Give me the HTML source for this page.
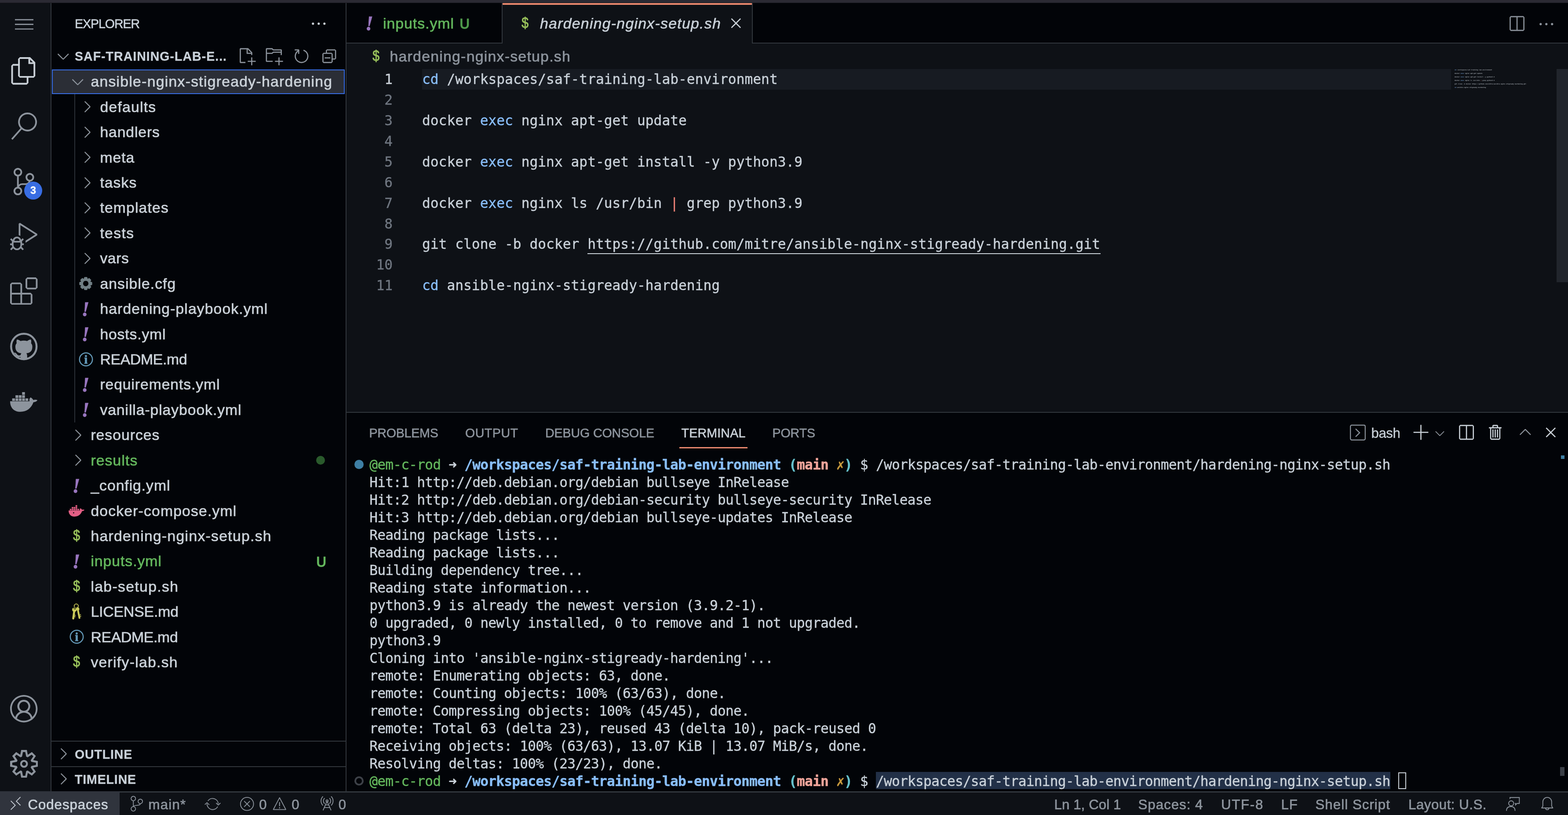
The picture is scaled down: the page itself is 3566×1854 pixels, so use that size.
<!DOCTYPE html>
<html lang="en"><head><meta charset="utf-8"><title>hardening-nginx-setup.sh - saf-training-lab-environment</title>
<style>
#root{position:absolute;left:0;top:0;width:3566px;height:1854px;will-change:transform}
html,body{margin:0;padding:0;background:#0d1117;overflow:hidden}
body{width:3566px;height:1854px;position:relative;color:#cad1d8;-webkit-font-smoothing:antialiased}
.t{position:absolute;white-space:pre;margin:0;padding:0}
.ui{font-family:"Liberation Sans", sans-serif;font-size:33.8px;font-weight:400;font-style:normal;line-height:51px;height:51px;-webkit-text-stroke:0.7px}
.uii{font-family:"Liberation Sans", sans-serif;font-size:33.8px;font-weight:400;font-style:italic;line-height:51px;height:51px;-webkit-text-stroke:0.6px}
.ttl{font-family:"Liberation Sans", sans-serif;font-size:28.6px;font-weight:400;font-style:normal;line-height:43px;height:43px;-webkit-text-stroke:0.6px}
.hdr{font-family:"Liberation Sans", sans-serif;font-size:28.6px;font-weight:700;font-style:normal;line-height:43px;height:43px;-webkit-text-stroke:0.3px}
.sb{font-family:"Liberation Sans", sans-serif;font-size:31.2px;font-weight:400;font-style:normal;line-height:47px;height:47px;-webkit-text-stroke:0.7px}
.bash{font-family:"Liberation Sans", sans-serif;font-size:31.2px;font-weight:400;font-style:normal;line-height:47px;height:47px;-webkit-text-stroke:0.3px}
.badge{font-family:"Liberation Sans", sans-serif;font-size:23.4px;font-weight:700;font-style:normal;line-height:35px;height:35px;-webkit-text-stroke:0.5px}
.code{font-family:"DejaVu Sans Mono", "Liberation Mono", monospace;font-size:31.2px;font-weight:400;font-style:normal;line-height:47px;height:47px;-webkit-text-stroke:0.4px}
.ln{font-family:"DejaVu Sans Mono", "Liberation Mono", monospace;font-size:31.2px;font-weight:400;font-style:normal;line-height:47px;height:47px;-webkit-text-stroke:0.4px}
.term{font-family:"DejaVu Sans Mono", "Liberation Mono", monospace;font-size:31.2px;font-weight:400;font-style:normal;line-height:47px;height:47px;-webkit-text-stroke:0.4px}
.fi{font-family:"Liberation Serif", serif;font-size:45.5px;font-weight:700;font-style:italic;line-height:68px;height:68px;-webkit-text-stroke:0.9px}
.fd{font-family:"Liberation Sans", sans-serif;font-size:33px;font-weight:400;font-style:normal;line-height:50px;height:50px;-webkit-text-stroke:1.0px}

.fd{transform:scaleX(.86);transform-origin:50% 50%}
.term b{font-weight:700}
.mm{position:absolute;font-family:"DejaVu Sans Mono","Liberation Mono",monospace;font-size:3.09px;line-height:4.01px;white-space:pre;font-weight:700;letter-spacing:0.134px;opacity:.82}

</style></head><body><div id="root">
<div style="position:absolute;left:0px;top:0px;width:3566px;height:1854px;background:#0e1116;"></div>
<div style="position:absolute;left:0px;top:0px;width:3566px;height:6px;background:#2b2a33;"></div>
<div style="position:absolute;left:0px;top:6px;width:3566px;height:1px;background:#17171d;"></div>
<div style="position:absolute;left:0px;top:7px;width:115px;height:1793px;background:#0e1116;"></div>
<div style="position:absolute;left:115px;top:7px;width:2px;height:1793px;background:#31363c;"></div>
<div style="position:absolute;left:117px;top:7px;width:669px;height:1793px;background:#020408;"></div>
<div style="position:absolute;left:786px;top:7px;width:2px;height:1793px;background:#31363c;"></div>
<div style="position:absolute;left:788px;top:7px;width:2778px;height:92px;background:#020408;"></div>
<div style="position:absolute;left:788px;top:97px;width:2778px;height:2px;background:#31363c;"></div>
<div style="position:absolute;left:1141px;top:7px;width:2px;height:92px;background:#31363c;"></div>
<div style="position:absolute;left:1143px;top:7px;width:567px;height:92px;background:#0e1116;"></div>
<div style="position:absolute;left:1143px;top:7px;width:567px;height:4px;background:#e8876d;"></div>
<div style="position:absolute;left:1710px;top:7px;width:2px;height:92px;background:#31363c;"></div>
<div style="position:absolute;left:960px;top:157px;width:2340px;height:47px;background:#171b22;"></div>
<div style="position:absolute;left:3540px;top:157px;width:26px;height:485px;background:#21252c;"></div>
<div style="position:absolute;left:788px;top:937px;width:2778px;height:863px;background:#020408;"></div>
<div style="position:absolute;left:788px;top:937px;width:2778px;height:2px;background:#31363c;"></div>
<div style="position:absolute;left:0px;top:1800px;width:3566px;height:54px;background:#0e1116;"></div>
<div style="position:absolute;left:0px;top:1800px;width:3566px;height:3px;background:#31363c;"></div>
<div style="position:absolute;left:0px;top:1800px;width:272px;height:54px;background:#30343d;"></div>
<svg style="position:absolute;left:33.6px;top:32.8px;color:#8d949d;" width="42.2" height="42.2" viewBox="0 0 16 16" fill="currentColor"><path d="M16 5H0V4h16v1zm0 8H0v-1h16v1zm0-4.008H0V8h16v.992z"/></svg>
<svg style="position:absolute;left:23.3px;top:130.3px;color:#cad1d8;" width="62.4" height="62.4" viewBox="0 0 24 24" fill="currentColor"><path d="M17.5 0h-9L7 1.5V6H2.5L1 7.5v15.07L2.5 24h12.07L16 22.57V18h4.7l1.3-1.43V4.5L17.5 0zm0 2.12l2.38 2.38H17.5V2.12zm-3 20.38h-12v-15H7v9.07L8.5 18h6v4.5zm6-6h-12v-15H16V6h4.5v10.5z"/></svg>
<svg style="position:absolute;left:23.3px;top:256.3px;color:#8d949d;" width="62.4" height="62.4" viewBox="0 0 24 24" fill="currentColor"><path d="M15.25 0a8.25 8.25 0 0 0-6.18 13.72L1 22.88l1.12 1 8.05-9.12A8.251 8.251 0 1 0 15.25.01V0zm0 15a6.75 6.75 0 1 1 0-13.5 6.75 6.75 0 0 1 0 13.5z"/></svg>
<svg style="position:absolute;left:23.3px;top:381.8px;color:#8d949d;" width="62.4" height="62.4" viewBox="0 0 24 24" fill="currentColor"><path d="M21.007 8.222A3.738 3.738 0 0 0 15.045 5.2a3.737 3.737 0 0 0 1.156 6.583 2.988 2.988 0 0 1-2.668 1.67h-2.99a4.456 4.456 0 0 0-2.989 1.165V7.4a3.737 3.737 0 1 0-1.494 0v9.117a3.776 3.776 0 1 0 1.816.099 2.99 2.99 0 0 1 2.668-1.667h2.99a4.484 4.484 0 0 0 4.223-3.039 3.736 3.736 0 0 0 3.25-3.687zM4.565 3.738a2.242 2.242 0 1 1 4.484 0 2.242 2.242 0 0 1-4.484 0zm4.484 16.441a2.242 2.242 0 1 1-4.484 0 2.242 2.242 0 0 1 4.484 0zm8.221-9.715a2.242 2.242 0 1 1 0-4.485 2.242 2.242 0 0 1 0 4.485z"/></svg>
<svg style="position:absolute;left:23.3px;top:506.8px;color:#8d949d;" width="62.4" height="62.4" viewBox="0 0 24 24" fill="currentColor"><path d="M10.94 13.5l-1.32 1.32a3.73 3.73 0 0 0-7.24 0L1.06 13.5 0 14.56l1.72 1.72-.22.22V18H0v1.5h1.5v.08c.077.489.214.966.41 1.42L0 22.94 1.06 24l1.65-1.65A4.308 4.308 0 0 0 6 24a4.31 4.31 0 0 0 3.29-1.65L10.94 24 12 22.94 10.09 21c.198-.464.336-.951.41-1.45v-.1H12V18h-1.5v-1.5l-.22-.22L12 14.56l-1.06-1.06zM6 13.5a2.25 2.25 0 0 1 2.25 2.25h-4.5A2.25 2.25 0 0 1 6 13.5zm3 6a3.33 3.33 0 0 1-3 3 3.33 3.33 0 0 1-3-3v-2.25h6v2.25zm14.76-9.9v1.26L13.5 17.37V15.6l8.5-5.37L9 2v9.46a5.07 5.07 0 0 0-1.5-.72V.63L8.64 0l15.12 9.6z"/></svg>
<svg style="position:absolute;left:23.3px;top:630.8px;color:#8d949d;" width="62.4" height="62.4" viewBox="0 0 24 24" fill="currentColor"><path d="M13.5 1.5L15 0h7.5L24 1.5V9l-1.5 1.5H15L13.5 9V1.5zm1.5 0V9h7.5V1.5H15zM0 15V6l1.5-1.5H9L10.5 6v7.5H18l1.5 1.5v7.5L18 24H1.5L0 22.5V15zm9-1.5V6H1.5v7.5H9zM9 15H1.5v7.5H9V15zm1.5 7.5H18V15h-7.5v7.5z"/></svg>
<svg style="position:absolute;left:23.3px;top:757.3px;color:#8d949d;" width="62.4" height="62.4" viewBox="0 0 16 16" fill="currentColor"><circle cx="8" cy="8" r="7.6"/><g transform="translate(8 8.55) scale(0.97) translate(-8 -8)"><path fill="#0e1116" d="M8 0C3.58 0 0 3.58 0 8c0 3.54 2.29 6.53 5.47 7.59.4.07.55-.17.55-.38 0-.19-.01-.82-.01-1.49-2.01.37-2.53-.49-2.69-.94-.09-.23-.48-.94-.82-1.13-.28-.15-.68-.52-.01-.53.63-.01 1.08.58 1.23.82.72 1.21 1.87.87 2.33.66.07-.52.28-.87.51-1.07-1.78-.2-3.64-.89-3.64-3.95 0-.87.31-1.59.82-2.15-.08-.2-.36-1.02.08-2.12 0 0 .67-.21 2.2.82.64-.18 1.32-.27 2-.27.68 0 1.36.09 2 .27 1.53-1.04 2.2-.82 2.2-.82.44 1.1.16 1.92.08 2.12.51.56.82 1.27.82 2.15 0 3.07-1.87 3.75-3.65 3.95.29.25.54.73.54 1.48 0 1.07-.01 1.93-.01 2.2 0 .21.15.46.55.38A8.013 8.013 0 0016 8c0-4.42-3.58-8-8-8z"/></g><circle cx="8" cy="8" r="7.42" fill="none" stroke="currentColor" stroke-width="1.16"/></svg>
<svg style="position:absolute;left:23.3px;top:883.4px;color:#8d949d;" width="62.4" height="62.4" viewBox="0 0 24 24" fill="currentColor"><path d="M0 11.4 H17.0 C16.6 10.2 16.9 8.9 17.9 8.1 C19.0 8.7 19.9 9.6 20.3 10.4 C21.5 10.0 22.9 10.1 23.9 10.5 C23.3 11.6 22.1 12.2 20.4 12.3 C18.6 17.5 14.5 20.65 9.0 20.65 C3.5 20.65 0 17.3 0 11.4 Z"/><rect x="1.80" y="8.95" width="2.45" height="2.2"/><rect x="4.70" y="8.95" width="2.45" height="2.2"/><rect x="7.60" y="8.95" width="2.45" height="2.2"/><rect x="10.50" y="8.95" width="2.45" height="2.2"/><rect x="13.40" y="8.95" width="2.45" height="2.2"/><rect x="4.70" y="6.2" width="2.45" height="2.35"/><rect x="7.60" y="6.2" width="2.45" height="2.35"/><rect x="10.50" y="6.2" width="2.45" height="2.35"/><rect x="10.5" y="3.46" width="2.45" height="2.35"/></svg>
<svg style="position:absolute;left:23.3px;top:1581.3px;color:#8d949d;" width="62.4" height="62.4" viewBox="0 0 16 16" fill="currentColor"><path d="M16 7.992C16 3.58 12.416 0 8 0S0 3.58 0 7.992c0 2.43 1.104 4.62 2.832 6.09.016.016.032.016.032.032.144.112.288.224.448.336.08.048.144.111.224.175A7.98 7.98 0 0 0 8.016 16a7.98 7.98 0 0 0 4.48-1.375c.08-.048.144-.111.224-.16.144-.111.304-.223.448-.335.016-.016.032-.016.032-.032 1.696-1.487 2.8-3.676 2.8-6.106zm-8 7.001c-1.504 0-2.88-.48-4.016-1.279.016-.128.048-.255.08-.383a4.17 4.17 0 0 1 .416-.991c.176-.304.384-.576.64-.816.24-.24.528-.463.816-.639.304-.176.624-.304.976-.4A4.15 4.15 0 0 1 8 10.342a4.185 4.185 0 0 1 2.928 1.166c.368.368.656.8.864 1.295.112.288.192.592.24.911A7.03 7.03 0 0 1 8 14.993zm-2.448-7.4a2.49 2.49 0 0 1-.208-1.024c0-.351.064-.703.208-1.023.144-.32.336-.607.576-.847.24-.24.528-.431.848-.575.32-.144.672-.208 1.024-.208.368 0 .704.064 1.024.208.32.144.608.336.848.575.24.24.432.528.576.847.144.32.208.672.208 1.023 0 .368-.064.704-.208 1.023a2.84 2.84 0 0 1-.576.848 2.84 2.84 0 0 1-.848.575 2.715 2.715 0 0 1-2.064 0 2.84 2.84 0 0 1-.848-.575 2.526 2.526 0 0 1-.56-.848zm7.424 5.306c0-.032-.016-.048-.016-.08a5.22 5.22 0 0 0-.688-1.406 4.883 4.883 0 0 0-1.088-1.135 5.207 5.207 0 0 0-1.04-.608 2.82 2.82 0 0 0 .464-.383 4.2 4.2 0 0 0 .624-.784 3.624 3.624 0 0 0 .528-1.934 3.71 3.71 0 0 0-.288-1.47 3.799 3.799 0 0 0-.816-1.199 3.845 3.845 0 0 0-1.2-.8 3.72 3.72 0 0 0-1.472-.287 3.72 3.72 0 0 0-1.472.288 3.631 3.631 0 0 0-1.2.815 3.84 3.84 0 0 0-.8 1.199 3.71 3.71 0 0 0-.288 1.47c0 .352.048.688.144 1.007.096.336.224.64.4.927.16.288.384.544.624.784.144.144.304.271.48.383a5.12 5.12 0 0 0-1.04.624c-.416.32-.784.703-1.088 1.119a4.999 4.999 0 0 0-.688 1.406c-.016.032-.016.064-.016.08C1.776 11.636.992 9.91.992 7.992.992 4.14 4.144.991 8 .991s7.008 3.149 7.008 7.001a6.96 6.96 0 0 1-2.032 4.907z"/></svg>
<svg style="position:absolute;left:22.950000000000003px;top:1705.85px;color:#8d949d;" width="63.3" height="63.3" viewBox="0 0 24 24" fill="currentColor"><path fill-rule="evenodd" clip-rule="evenodd" d="M19.85 8.75l4.15.83v4.84l-4.15.83 2.35 3.52-3.43 3.43-3.52-2.35-.83 4.15H9.58l-.83-4.15-3.52 2.35-3.43-3.43 2.35-3.52L0 14.42V9.58l4.15-.83L1.8 5.23 5.23 1.8l3.52 2.35L9.58 0h4.84l.83 4.15 3.52-2.35 3.43 3.43-2.35 3.52zm-1.57 5.07l4-.81v-2l-4-.81-.54-1.3 2.29-3.43-1.43-1.43-3.43 2.29-1.3-.54-.81-4h-2l-.81 4-1.3.54-3.43-2.29-1.43 1.43L6.38 8.9l-.54 1.3-4 .81v2l4 .81.54 1.3-2.29 3.43 1.43 1.43 3.43-2.29 1.3.54.81 4h2l.81-4 1.3-.54 3.43 2.29 1.43-1.43-2.29-3.43.54-1.3z"/><circle cx="12" cy="12" r="2.55" fill="none" stroke="currentColor" stroke-width="1.65"/></svg>
<div style="position:absolute;left:54.900000000000006px;top:412.7px;width:41px;height:41px;border-radius:50%;background:#386de3"></div>
<svg style="position:absolute;left:704.2px;top:32.7px;color:#cad1d8;" width="41.6" height="41.6" viewBox="0 0 16 16" fill="currentColor"><path d="M4 8a1 1 0 1 1-2 0 1 1 0 0 1 2 0zm5 0a1 1 0 1 1-2 0 1 1 0 0 1 2 0zm5 0a1 1 0 1 1-2 0 1 1 0 0 1 2 0z"/></svg>
<svg style="position:absolute;left:122.7px;top:107.2px;color:#8d949d;" width="41.6" height="41.6" viewBox="0 0 16 16" fill="currentColor"><path d="M7.976 10.072l4.357-4.357.62.618L8.284 11h-.618L3 6.333l.619-.618 4.357 4.357z"/></svg>
<svg style="position:absolute;left:540.2px;top:107.2px;color:#8d949d;" width="41.6" height="41.6" viewBox="0 0 16 16" fill="currentColor"><path d="M9.5 1.1l3.4 3.5.1.4v2h-1V6H8V2H3v11h4v1H2.5l-.5-.5v-12l.5-.5h6.7l.3.1zM9 2v3h2.9L9 2zm4 14h-1v-3H9v-1h3V9h1v3h3v1h-3v3z"/></svg>
<svg style="position:absolute;left:602.2px;top:107.2px;color:#8d949d;" width="41.6" height="41.6" viewBox="0 0 16 16" fill="currentColor"><path d="M14.5 2H7.71l-.85-.85L6.51 1h-5l-.5.5v11l.5.5H7v-1H1.99V6h4.49l.35-.15.86-.86H14v1.5l-.001.51h1.011V2.5L14.5 2zm-.51 2h-6.5l-.35.15-.86.86H2v-3h4.29l.85.85.36.15H14l-.01.99zM13 16h-1v-3H9v-1h3V9h1v3h3v1h-3v3z"/></svg>
<svg style="position:absolute;left:664.9000000000001px;top:107.2px;color:#8d949d;" width="41.6" height="41.6" viewBox="0 0 16 16" fill="currentColor"><path d="M4.681 3H2V2h3.5l.5.5V6H5V4a5 5 0 1 0 4.53-.761l.302-.954A6 6 0 1 1 4.681 3z"/></svg>
<svg style="position:absolute;left:727.7px;top:107.2px;color:#8d949d;" width="41.6" height="41.6" viewBox="0 0 16 16" fill="currentColor"><path d="M9 9H4v1h5V9z"/><path d="M5 3l1-1h7l1 1v7l-1 1h-2v2l-1 1H3l-1-1V6l1-1h2V3zm1 2h4l1 1v4h2V3H6v2zm4 1H3v7h7V6z"/></svg>
<div style="position:absolute;left:118px;top:158px;width:666.4px;height:56px;box-sizing:border-box;background:#2b2e36;border:2px solid #386de3"></div>
<div style="position:absolute;left:169px;top:214.43px;width:2px;height:746.59px;background:#2a2f36;"></div>
<svg style="position:absolute;left:156.0px;top:164.915px;color:#8d949d;" width="41.6" height="41.6" viewBox="0 0 16 16" fill="currentColor"><path d="M7.976 10.072l4.357-4.357.62.618L8.284 11h-.618L3 6.333l.619-.618 4.357 4.357z"/></svg>
<svg style="position:absolute;left:177.1px;top:222.345px;color:#8d949d;" width="41.6" height="41.6" viewBox="0 0 16 16" fill="currentColor"><path d="M10.072 8.024L5.715 3.667l.618-.62L11 7.716v.618L6.333 13l-.618-.619 4.357-4.357z"/></svg>
<svg style="position:absolute;left:177.1px;top:279.775px;color:#8d949d;" width="41.6" height="41.6" viewBox="0 0 16 16" fill="currentColor"><path d="M10.072 8.024L5.715 3.667l.618-.62L11 7.716v.618L6.333 13l-.618-.619 4.357-4.357z"/></svg>
<svg style="position:absolute;left:177.1px;top:337.2049999999999px;color:#8d949d;" width="41.6" height="41.6" viewBox="0 0 16 16" fill="currentColor"><path d="M10.072 8.024L5.715 3.667l.618-.62L11 7.716v.618L6.333 13l-.618-.619 4.357-4.357z"/></svg>
<svg style="position:absolute;left:177.1px;top:394.635px;color:#8d949d;" width="41.6" height="41.6" viewBox="0 0 16 16" fill="currentColor"><path d="M10.072 8.024L5.715 3.667l.618-.62L11 7.716v.618L6.333 13l-.618-.619 4.357-4.357z"/></svg>
<svg style="position:absolute;left:177.1px;top:452.06499999999994px;color:#8d949d;" width="41.6" height="41.6" viewBox="0 0 16 16" fill="currentColor"><path d="M10.072 8.024L5.715 3.667l.618-.62L11 7.716v.618L6.333 13l-.618-.619 4.357-4.357z"/></svg>
<svg style="position:absolute;left:177.1px;top:509.49499999999995px;color:#8d949d;" width="41.6" height="41.6" viewBox="0 0 16 16" fill="currentColor"><path d="M10.072 8.024L5.715 3.667l.618-.62L11 7.716v.618L6.333 13l-.618-.619 4.357-4.357z"/></svg>
<svg style="position:absolute;left:177.1px;top:566.9250000000001px;color:#8d949d;" width="41.6" height="41.6" viewBox="0 0 16 16" fill="currentColor"><path d="M10.072 8.024L5.715 3.667l.618-.62L11 7.716v.618L6.333 13l-.618-.619 4.357-4.357z"/></svg>
<svg style="position:absolute;left:179.7px;top:629.6550000000001px" width="30" height="30" viewBox="0 0 30 30"><path fill="#717f85" fill-rule="evenodd" stroke="#717f85" stroke-width="1.2" stroke-linejoin="round" d="M11.06 4.94 L12.21 0.97 L17.79 0.97 L18.94 4.94 L19.33 5.11 L22.94 3.11 L26.89 7.06 L24.89 10.67 L25.06 11.06 L29.03 12.21 L29.03 17.79 L25.06 18.94 L24.89 19.33 L26.89 22.94 L22.94 26.89 L19.33 24.89 L18.94 25.06 L17.79 29.03 L12.21 29.03 L11.06 25.06 L10.67 24.89 L7.06 26.89 L3.11 22.94 L5.11 19.33 L4.94 18.94 L0.97 17.79 L0.97 12.21 L4.94 11.06 L5.11 10.67 L3.11 7.06 L7.06 3.11 L10.67 5.11Z M15 8.2 a6.800 6.800 0 1 0 0.010 0Z"/></svg>
<svg style="position:absolute;left:178.5px;top:800.6450000000001px" width="33" height="33" viewBox="0 0 33 33"><circle cx="16.5" cy="16.5" r="14.7" fill="none" stroke="#6398b7" stroke-width="2.5"/><text x="16.3" y="25.8" text-anchor="middle" font-family="Liberation Serif, serif" font-weight="700" font-size="27.5" fill="#6398b7" stroke="#6398b7" stroke-width="0.9">i</text></svg>
<svg style="position:absolute;left:155.7px;top:968.9350000000001px;color:#8d949d;" width="41.6" height="41.6" viewBox="0 0 16 16" fill="currentColor"><path d="M10.072 8.024L5.715 3.667l.618-.62L11 7.716v.618L6.333 13l-.618-.619 4.357-4.357z"/></svg>
<svg style="position:absolute;left:155.7px;top:1026.365px;color:#8d949d;" width="41.6" height="41.6" viewBox="0 0 16 16" fill="currentColor"><path d="M10.072 8.024L5.715 3.667l.618-.62L11 7.716v.618L6.333 13l-.618-.619 4.357-4.357z"/></svg>
<svg style="position:absolute;left:156.1px;top:1143.525px;color:#e35f85" width="36.2" height="36.2" viewBox="0 0 24 24" fill="currentColor"><path d="M0 11.4 H17.0 C16.6 10.2 16.9 8.9 17.9 8.1 C19.0 8.7 19.9 9.6 20.3 10.4 C21.5 10.0 22.9 10.1 23.9 10.5 C23.3 11.6 22.1 12.2 20.4 12.3 C18.6 17.5 14.5 20.65 9.0 20.65 C3.5 20.65 0 17.3 0 11.4 Z"/><rect x="1.80" y="8.95" width="2.45" height="2.2"/><rect x="4.70" y="8.95" width="2.45" height="2.2"/><rect x="7.60" y="8.95" width="2.45" height="2.2"/><rect x="10.50" y="8.95" width="2.45" height="2.2"/><rect x="13.40" y="8.95" width="2.45" height="2.2"/><rect x="4.70" y="6.2" width="2.45" height="2.35"/><rect x="7.60" y="6.2" width="2.45" height="2.35"/><rect x="10.50" y="6.2" width="2.45" height="2.35"/><rect x="10.5" y="3.46" width="2.45" height="2.35"/><circle cx="7.6" cy="15" r="0.9" fill="#020408"/></svg>
<svg style="position:absolute;left:159.7px;top:1371.5449999999998px;overflow:visible" width="27.2" height="38.8" viewBox="-14 -20 28 40" fill="none" stroke="#cbcb5a" stroke-linecap="round"><circle cx="-0.2" cy="-13.2" r="4.8" stroke-width="1.9"/><path d="M3.3 -5.8 L7.4 14.8" stroke-width="4.2"/><circle cx="3.2" cy="-6.2" r="3.2" fill="#cbcb5a" stroke-width="1.5"/><path d="M-4.6 -3.5 L-7.2 16" stroke-width="4.8"/><circle cx="-4.6" cy="-4.6" r="4.3" fill="#cbcb5a" stroke-width="2"/><circle cx="-3.4" cy="-8.2" r="2.2" stroke="#020408" stroke-width="1.1"/><path d="M-4.2 8 l2.2 0.6 M-4.6 11.5 l2.2 0.6 M8.6 7.5 l1.6 -0.6 M9.3 11 l1.6 -0.6" stroke-width="1.6"/></svg>
<svg style="position:absolute;left:157.5px;top:1432.375px" width="33" height="33" viewBox="0 0 33 33"><circle cx="16.5" cy="16.5" r="14.7" fill="none" stroke="#6398b7" stroke-width="2.5"/><text x="16.3" y="25.8" text-anchor="middle" font-family="Liberation Serif, serif" font-weight="700" font-size="27.5" fill="#6398b7" stroke="#6398b7" stroke-width="0.9">i</text></svg>
<div style="position:absolute;left:719px;top:1037.165px;width:20px;height:20px;border-radius:50%;background:#2a5a2c"></div>
<div style="position:absolute;left:117px;top:1685px;width:669px;height:2px;background:#31363c;"></div>
<div style="position:absolute;left:117px;top:1743px;width:669px;height:2px;background:#31363c;"></div>
<svg style="position:absolute;left:123.2px;top:1694.2px;color:#8d949d;" width="41.6" height="41.6" viewBox="0 0 16 16" fill="currentColor"><path d="M10.072 8.024L5.715 3.667l.618-.62L11 7.716v.618L6.333 13l-.618-.619 4.357-4.357z"/></svg>
<svg style="position:absolute;left:123.2px;top:1751.2px;color:#8d949d;" width="41.6" height="41.6" viewBox="0 0 16 16" fill="currentColor"><path d="M10.072 8.024L5.715 3.667l.618-.62L11 7.716v.618L6.333 13l-.618-.619 4.357-4.357z"/></svg>
<svg style="position:absolute;left:1653.2px;top:32.2px;color:#cad1d8;" width="41.6" height="41.6" viewBox="0 0 16 16" fill="currentColor"><path d="M8 8.707l3.646 3.647.708-.707L8.707 8l3.647-3.646-.707-.708L8 7.293 4.354 3.646l-.707.708L7.293 8l-3.646 3.646.707.708L8 8.707z"/></svg>
<svg style="position:absolute;left:3428.2px;top:33.7px;color:#8d949d;" width="41.6" height="41.6" viewBox="0 0 16 16" fill="currentColor"><path d="M14 1H3L2 2v11l1 1h11l1-1V2l-1-1zM8 13H3V2h5v11zm6 0H9V2h5v11z"/></svg>
<svg style="position:absolute;left:3496.2px;top:33.7px;color:#8d949d;" width="41.6" height="41.6" viewBox="0 0 16 16" fill="currentColor"><path d="M4 8a1 1 0 1 1-2 0 1 1 0 0 1 2 0zm5 0a1 1 0 1 1-2 0 1 1 0 0 1 2 0zm5 0a1 1 0 1 1-2 0 1 1 0 0 1 2 0z"/></svg>
<div style="position:absolute;left:1336.26px;top:575.6px;width:1166.406px;height:2px;background:#cad1d8;"></div>
<div class="mm" style="left:3307.9px;top:156.6px"><span style="color:#89befa">cd</span> /workspaces/saf-training-lab-environment

docker <span style="color:#89befa">exec</span> nginx apt-get update

docker <span style="color:#89befa">exec</span> nginx apt-get install -y python3.9

docker <span style="color:#89befa">exec</span> nginx ls /usr/bin <span style="color:#ee8277">|</span> grep python3.9

git clone -b docker https://github.com/mitre/ansible-nginx-stigready-hardening.git

<span style="color:#89befa">cd</span> ansible-nginx-stigready-hardening</div>
<div style="position:absolute;left:1545px;top:1017px;width:154.5px;height:3px;background:#e8876d;"></div>
<svg style="position:absolute;left:3069.9px;top:965.9px" width="36" height="36" viewBox="0 0 36 36" fill="none" stroke="#8d949d" stroke-width="2.2"><rect x="1.2" y="1.2" width="33.6" height="33.6" rx="3"/><path d="M13 9.500 l9 9 l-9 9" stroke-width="2.4"/></svg>
<svg style="position:absolute;left:3212.0px;top:963.6px;color:#cad1d8;" width="41.6" height="41.6" viewBox="0 0 16 16" fill="currentColor"><path d="M14 7v1H8v6H7V8H1V7h6V1h1v6h6z"/></svg>
<svg style="position:absolute;left:3257.5px;top:968.5px;color:#8d949d;" width="33" height="33" viewBox="0 0 16 16" fill="currentColor"><path d="M7.976 10.072l4.357-4.357.62.618L8.284 11h-.618L3 6.333l.619-.618 4.357 4.357z"/></svg>
<svg style="position:absolute;left:3313.2px;top:963.8000000000001px;color:#cad1d8;" width="41.6" height="41.6" viewBox="0 0 16 16" fill="currentColor"><path d="M14 1H3L2 2v11l1 1h11l1-1V2l-1-1zM8 13H3V2h5v11zm6 0H9V2h5v11z"/></svg>
<svg style="position:absolute;left:3381.2px;top:963.8000000000001px;color:#cad1d8;" width="41.6" height="41.6" viewBox="0 0 16 16" fill="currentColor"><path d="M10 3h3v1h-1v9l-1 1H4l-1-1V4H2V3h3V2a1 1 0 0 1 1-1h3a1 1 0 0 1 1 1v1zM9 2H6v1h3V2zM4 13h7V4H4v9zm2-8H5v7h1V5zm1 0h1v7H7V5zm2 0h1v7H9V5z"/></svg>
<svg style="position:absolute;left:3448.2px;top:962.8000000000001px;color:#8d949d;" width="41.6" height="41.6" viewBox="0 0 16 16" fill="currentColor"><path d="M8.024 5.928l-4.357 4.357-.62-.618L7.716 5h.618L13 9.667l-.619.618-4.357-4.357z"/></svg>
<svg style="position:absolute;left:3505.7px;top:962.8000000000001px;color:#cad1d8;" width="41.6" height="41.6" viewBox="0 0 16 16" fill="currentColor"><path d="M8 8.707l3.646 3.647.708-.707L8.707 8l3.647-3.646-.707-.708L8 7.293 4.354 3.646l-.707.708L7.293 8l-3.646 3.646.707.708L8 8.707z"/></svg>
<div style="position:absolute;left:1992.3px;top:1756px;width:1170px;height:39px;background:#223047;"></div>
<div style="position:absolute;left:3180px;top:1756.5px;width:18px;height:38px;border:2px solid #cad1d8;box-sizing:border-box"></div>
<div style="position:absolute;left:805.9px;top:1045.9px;width:21px;height:21px;border-radius:50%;background:#3e7fa4"></div>
<div style="position:absolute;left:805.9px;top:1765.9px;width:21px;height:21px;border-radius:50%;border:4px solid #3d4148;box-sizing:border-box"></div>
<div style="position:absolute;left:3550px;top:1036px;width:8px;height:8px;background:#3e7fa4;"></div>
<div style="position:absolute;left:3548px;top:1745px;width:10px;height:20px;background:#3a3f47;"></div>
<svg style="position:absolute;left:15.2px;top:1808.2px;color:#cad1d8;" width="41.6" height="41.6" viewBox="0 0 16 16" fill="currentColor"><g fill="none" stroke="currentColor" stroke-width="0.7"><path d="M3.7 5.35 L7.55 9.2 L3.7 13.05"/><path d="M12.15 2.0 L8.5 5.65 L12.15 9.3"/></g></svg>
<svg style="position:absolute;left:289.7px;top:1808.2px;color:#8d949d;" width="41.6" height="41.6" viewBox="0 0 16 16" fill="currentColor"><g fill="none" stroke="currentColor" stroke-width="0.7"><circle cx="5.1" cy="3.3" r="1.95"/><circle cx="5.1" cy="12.3" r="1.95"/><circle cx="11.2" cy="5.8" r="1.95"/><path d="M5.1 5.25 V10.35 M11.2 7.75 C11.2 10 5.1 8.6 5.1 10.35"/></g></svg>
<svg style="position:absolute;left:462.8px;top:1808.2px;color:#8d949d;" width="41.6" height="41.6" viewBox="0 0 16 16" fill="currentColor"><g fill="none" stroke="currentColor" stroke-width="0.7"><path d="M3.76 5.35 A5 5 0 0 1 12.85 7.85 M12.38 10.35 A5 5 0 0 1 2.98 7.85"/><path d="M10.97 7.22 L12.85 8.95 L14.73 7.22 M1.100 8.600 L2.980 6.900 L5 8.800" stroke-linejoin="miter"/></g></svg>
<svg style="position:absolute;left:540.8000000000001px;top:1808.2px;color:#8d949d;" width="41.6" height="41.6" viewBox="0 0 16 16" fill="currentColor"><g fill="none" stroke="currentColor" stroke-width="0.7"><circle cx="8" cy="8" r="5.72"/><path d="M5.500 5.500 L10.500 10.500 M10.500 5.500 L5.500 10.500"/></g></svg>
<svg style="position:absolute;left:615.0px;top:1808.2px;color:#8d949d;" width="41.6" height="41.6" viewBox="0 0 16 16" fill="currentColor"><g fill="none" stroke="currentColor" stroke-width="0.7"><path d="M8 2.55 L13.45 12.900 H2.550 Z" stroke-linejoin="round"/><path d="M8 6.400 V10 M8 10.900 V11.900" stroke-width="0.8"/></g></svg>
<svg style="position:absolute;left:722.9000000000001px;top:1808.2px;color:#8d949d;" width="41.6" height="41.6" viewBox="0 0 16 16" fill="currentColor"><g fill="none" stroke="currentColor" stroke-width="0.7"><path d="M8 5.600 L4.500 13.600 M8 5.600 L11.500 13.600 M5.700 11.200 H10.300 M6.700 8.900 H9.300"/><circle cx="8" cy="5.400" r="0.900"/><path d="M5.950 2.950 A3.200 3.200 0 0 0 5.950 7.850 M10.050 2.950 A3.200 3.200 0 0 1 10.050 7.850 M4.450 1.450 A5.400 5.400 0 0 0 4.450 9.350 M11.550 1.450 A5.400 5.400 0 0 1 11.550 9.350"/></g></svg>
<svg style="position:absolute;left:3420.2px;top:1808.2px;color:#8d949d;" width="41.6" height="41.6" viewBox="0 0 16 16" fill="currentColor"><g fill="none" stroke="currentColor" stroke-width="0.7"><path d="M5.400 3.700 V2.400 H13.600 V7.600 H11.500 L10.300 8.900 V7.600 H9.600"/><circle cx="6.450" cy="7.500" r="2.200"/><path d="M2.350 14 C2.350 11.400 4 10.300 6.200 10.300 C8.400 10.300 9.850 11.400 9.850 14"/></g></svg>
<svg style="position:absolute;left:3498.2px;top:1808.2px;color:#8d949d;" width="41.6" height="41.6" viewBox="0 0 16 16" fill="currentColor"><g fill="none" stroke="currentColor" stroke-width="0.7"><path d="M3.100 11.550 H12.900 L11.850 9.900 V6.100 A3.850 3.850 0 0 0 4.150 6.100 V9.900 Z" stroke-linejoin="round"/><path d="M6.500 11.900 A1.550 1.550 0 0 0 9.500 11.900"/></g></svg>
<div class="t badge" style="left:68.9px;top:415.7px;color:#ffffff;">3</div>
<div class="t ttl" style="left:170.0px;top:33.0px;color:#c9d1d9;letter-spacing:-1.092px;">EXPLORER</div>
<div class="t hdr" style="left:170.0px;top:106.5px;color:#c9d1d9;letter-spacing:0.970px;">SAF-TRAINING-LAB-E...</div>
<div class="t ui" style="left:206.4px;top:160.2px;letter-spacing:1.238px;">ansible-nginx-stigready-hardening</div>
<div class="t ui" style="left:227.4px;top:217.6px;letter-spacing:1.203px;">defaults</div>
<div class="t ui" style="left:227.4px;top:275.1px;letter-spacing:0.855px;">handlers</div>
<div class="t ui" style="left:227.4px;top:332.5px;letter-spacing:0.965px;">meta</div>
<div class="t ui" style="left:227.4px;top:389.9px;letter-spacing:1.022px;">tasks</div>
<div class="t ui" style="left:227.4px;top:447.4px;letter-spacing:1.108px;">templates</div>
<div class="t ui" style="left:227.4px;top:504.8px;letter-spacing:1.325px;">tests</div>
<div class="t ui" style="left:227.4px;top:562.2px;letter-spacing:0.535px;">vars</div>
<div class="t ui" style="left:227.4px;top:619.7px;letter-spacing:1.038px;">ansible.cfg</div>
<div class="t fi" style="left:185.5px;top:669.6px;color:#9976bf;">!</div>
<div class="t ui" style="left:227.4px;top:677.1px;letter-spacing:1.053px;">hardening-playbook.yml</div>
<div class="t fi" style="left:185.5px;top:727.0px;color:#9976bf;">!</div>
<div class="t ui" style="left:227.4px;top:734.5px;letter-spacing:0.807px;">hosts.yml</div>
<div class="t ui" style="left:227.4px;top:791.9px;letter-spacing:-0.326px;">README.md</div>
<div class="t fi" style="left:185.5px;top:841.9px;color:#9976bf;">!</div>
<div class="t ui" style="left:227.4px;top:849.4px;letter-spacing:0.863px;">requirements.yml</div>
<div class="t fi" style="left:185.5px;top:899.3px;color:#9976bf;">!</div>
<div class="t ui" style="left:227.4px;top:906.8px;letter-spacing:0.884px;">vanilla-playbook.yml</div>
<div class="t ui" style="left:206.4px;top:964.2px;letter-spacing:0.957px;">resources</div>
<div class="t ui" style="left:206.4px;top:1021.7px;color:#64b75d;letter-spacing:1.065px;">results</div>
<div class="t fi" style="left:164.5px;top:1071.6px;color:#9976bf;">!</div>
<div class="t ui" style="left:206.4px;top:1079.1px;letter-spacing:0.915px;">_config.yml</div>
<div class="t ui" style="left:206.4px;top:1136.5px;letter-spacing:1.123px;">docker-compose.yml</div>
<div class="t fd" style="left:164.5px;top:1193.0px;color:#98c05b;">$</div>
<div class="t ui" style="left:206.4px;top:1194.0px;letter-spacing:1.254px;">hardening-nginx-setup.sh</div>
<div class="t fi" style="left:164.5px;top:1243.9px;color:#9976bf;">!</div>
<div class="t ui" style="left:206.4px;top:1251.4px;color:#64b75d;letter-spacing:0.936px;">inputs.yml</div>
<div class="t fd" style="left:164.5px;top:1307.8px;color:#98c05b;">$</div>
<div class="t ui" style="left:206.4px;top:1308.8px;letter-spacing:1.323px;">lab-setup.sh</div>
<div class="t ui" style="left:206.4px;top:1366.2px;letter-spacing:-0.147px;">LICENSE.md</div>
<div class="t ui" style="left:206.4px;top:1423.7px;letter-spacing:-0.326px;">README.md</div>
<div class="t fd" style="left:164.5px;top:1480.1px;color:#98c05b;">$</div>
<div class="t ui" style="left:206.4px;top:1481.1px;letter-spacing:1.255px;">verify-lab.sh</div>
<div class="t ui" style="left:719.5px;top:1252.9px;color:#64b75d;font-size:31px;-webkit-text-stroke:1.6px #64b75d;">U</div>
<div class="t hdr" style="left:170.0px;top:1694.5px;color:#c9d1d9;letter-spacing:0.786px;">OUTLINE</div>
<div class="t hdr" style="left:170.0px;top:1751.5px;color:#c9d1d9;letter-spacing:0.820px;">TIMELINE</div>
<div class="t fi" style="left:831.0px;top:20.0px;color:#9976bf;">!</div>
<div class="t ui" style="left:871.0px;top:27.5px;color:#64b75d;letter-spacing:0.986px;">inputs.yml</div>
<div class="t ui" style="left:1045.5px;top:29.0px;color:#4f9a4b;font-size:31px;-webkit-text-stroke:1.6px #4f9a4b;">U</div>
<div class="t fd" style="left:1185.0px;top:27.0px;color:#98c05b;">$</div>
<div class="t uii" style="left:1228.0px;top:27.5px;color:#c9d1d9;letter-spacing:1.275px;">hardening-nginx-setup.sh</div>
<div class="t fd" style="left:845.5px;top:102.0px;color:#98c05b;">$</div>
<div class="t ui" style="left:886.5px;top:102.5px;color:#8d949d;letter-spacing:1.254px;">hardening-nginx-setup.sh</div>
<div class="t ln" style="right:2673.0px;top:157.0px;">1</div>
<div class="t code" style="left:960.0px;top:157.0px;color:#c9d1d9;letter-spacing:0.03px;"><span style="color:#89befa">cd</span> /workspaces/saf-training-lab-environment</div>
<div class="t ln" style="right:2673.0px;top:203.9px;color:#6f7680;">2</div>
<div class="t ln" style="right:2673.0px;top:250.8px;color:#6f7680;">3</div>
<div class="t code" style="left:960.0px;top:250.8px;color:#c9d1d9;letter-spacing:0.03px;">docker <span style="color:#89befa">exec</span> nginx apt-get update</div>
<div class="t ln" style="right:2673.0px;top:297.8px;color:#6f7680;">4</div>
<div class="t ln" style="right:2673.0px;top:344.7px;color:#6f7680;">5</div>
<div class="t code" style="left:960.0px;top:344.7px;color:#c9d1d9;letter-spacing:0.03px;">docker <span style="color:#89befa">exec</span> nginx apt-get install -y python3.9</div>
<div class="t ln" style="right:2673.0px;top:391.6px;color:#6f7680;">6</div>
<div class="t ln" style="right:2673.0px;top:438.5px;color:#6f7680;">7</div>
<div class="t code" style="left:960.0px;top:438.5px;color:#c9d1d9;letter-spacing:0.03px;">docker <span style="color:#89befa">exec</span> nginx ls /usr/bin <span style="color:#ee8277">|</span> grep python3.9</div>
<div class="t ln" style="right:2673.0px;top:485.5px;color:#6f7680;">8</div>
<div class="t ln" style="right:2673.0px;top:532.4px;color:#6f7680;">9</div>
<div class="t code" style="left:960.0px;top:532.4px;color:#c9d1d9;letter-spacing:0.03px;">git clone -b docker https://github.com/mitre/ansible-nginx-stigready-hardening.git</div>
<div class="t ln" style="right:2673.0px;top:579.3px;color:#6f7680;">10</div>
<div class="t ln" style="right:2673.0px;top:626.3px;color:#6f7680;">11</div>
<div class="t code" style="left:960.0px;top:626.3px;color:#c9d1d9;letter-spacing:0.03px;"><span style="color:#89befa">cd</span> ansible-nginx-stigready-hardening</div>
<div class="t ttl" style="left:839.5px;top:963.8px;color:#8d949d;letter-spacing:-0.238px;">PROBLEMS</div>
<div class="t ttl" style="left:1058.0px;top:963.8px;color:#8d949d;letter-spacing:0.492px;">OUTPUT</div>
<div class="t ttl" style="left:1240.0px;top:963.8px;color:#8d949d;letter-spacing:-0.113px;">DEBUG CONSOLE</div>
<div class="t ttl" style="left:1549.5px;top:963.8px;letter-spacing:0.178px;">TERMINAL</div>
<div class="t ttl" style="left:1756.5px;top:963.8px;color:#8d949d;letter-spacing:-0.097px;">PORTS</div>
<div class="t bash" style="left:3118.5px;top:962.3px;color:#c9d1d9;letter-spacing:-0.410px;">bash</div>
<div class="t term" style="left:840.3px;top:1033.5px;color:#c9d1d9;letter-spacing:-0.783px;"><span style="color:#64b75d">@em-c-rod</span> ➜ <b style="color:#89befa">/workspaces/saf-training-lab-environment</b> <b style="color:#66c2cd">(</b><b style="color:#f2a59b">main</b> <b style="color:#c99b3e">✗</b><b style="color:#66c2cd">)</b> $ /workspaces/saf-training-lab-environment/hardening-nginx-setup.sh</div>
<div class="t term" style="left:840.3px;top:1073.5px;color:#c9d1d9;letter-spacing:-0.783px;">Hit:1 http://deb.debian.org/debian bullseye InRelease</div>
<div class="t term" style="left:840.3px;top:1113.5px;color:#c9d1d9;letter-spacing:-0.783px;">Hit:2 http://deb.debian.org/debian-security bullseye-security InRelease</div>
<div class="t term" style="left:840.3px;top:1153.5px;color:#c9d1d9;letter-spacing:-0.783px;">Hit:3 http://deb.debian.org/debian bullseye-updates InRelease</div>
<div class="t term" style="left:840.3px;top:1193.5px;color:#c9d1d9;letter-spacing:-0.783px;">Reading package lists...</div>
<div class="t term" style="left:840.3px;top:1233.5px;color:#c9d1d9;letter-spacing:-0.783px;">Reading package lists...</div>
<div class="t term" style="left:840.3px;top:1273.5px;color:#c9d1d9;letter-spacing:-0.783px;">Building dependency tree...</div>
<div class="t term" style="left:840.3px;top:1313.5px;color:#c9d1d9;letter-spacing:-0.783px;">Reading state information...</div>
<div class="t term" style="left:840.3px;top:1353.5px;color:#c9d1d9;letter-spacing:-0.783px;">python3.9 is already the newest version (3.9.2-1).</div>
<div class="t term" style="left:840.3px;top:1393.5px;color:#c9d1d9;letter-spacing:-0.783px;">0 upgraded, 0 newly installed, 0 to remove and 1 not upgraded.</div>
<div class="t term" style="left:840.3px;top:1433.5px;color:#c9d1d9;letter-spacing:-0.783px;">python3.9</div>
<div class="t term" style="left:840.3px;top:1473.5px;color:#c9d1d9;letter-spacing:-0.783px;">Cloning into 'ansible-nginx-stigready-hardening'...</div>
<div class="t term" style="left:840.3px;top:1513.5px;color:#c9d1d9;letter-spacing:-0.783px;">remote: Enumerating objects: 63, done.</div>
<div class="t term" style="left:840.3px;top:1553.5px;color:#c9d1d9;letter-spacing:-0.783px;">remote: Counting objects: 100% (63/63), done.</div>
<div class="t term" style="left:840.3px;top:1593.5px;color:#c9d1d9;letter-spacing:-0.783px;">remote: Compressing objects: 100% (45/45), done.</div>
<div class="t term" style="left:840.3px;top:1633.5px;color:#c9d1d9;letter-spacing:-0.783px;">remote: Total 63 (delta 23), reused 43 (delta 10), pack-reused 0</div>
<div class="t term" style="left:840.3px;top:1673.5px;color:#c9d1d9;letter-spacing:-0.783px;">Receiving objects: 100% (63/63), 13.07 KiB | 13.07 MiB/s, done.</div>
<div class="t term" style="left:840.3px;top:1713.5px;color:#c9d1d9;letter-spacing:-0.783px;">Resolving deltas: 100% (23/23), done.</div>
<div class="t term" style="left:840.3px;top:1753.5px;color:#c9d1d9;letter-spacing:-0.783px;"><span style="color:#64b75d">@em-c-rod</span> ➜ <b style="color:#89befa">/workspaces/saf-training-lab-environment</b> <b style="color:#66c2cd">(</b><b style="color:#f2a59b">main</b> <b style="color:#c99b3e">✗</b><b style="color:#66c2cd">)</b> $ /workspaces/saf-training-lab-environment/hardening-nginx-setup.sh</div>
<div class="t sb" style="left:63.5px;top:1806.8px;color:#c9d1d9;letter-spacing:0.963px;">Codespaces</div>
<div class="t sb" style="left:337.5px;top:1806.8px;color:#8d949d;letter-spacing:1.250px;">main*</div>
<div class="t sb" style="left:589.3px;top:1806.8px;color:#8d949d;">0</div>
<div class="t sb" style="left:663.3px;top:1806.8px;color:#8d949d;">0</div>
<div class="t sb" style="left:769.8px;top:1806.8px;color:#8d949d;">0</div>
<div class="t sb" style="left:2397.5px;top:1806.8px;color:#8d949d;letter-spacing:0.105px;">Ln 1, Col 1</div>
<div class="t sb" style="left:2588.5px;top:1806.8px;color:#8d949d;letter-spacing:1.033px;">Spaces: 4</div>
<div class="t sb" style="left:2777.0px;top:1806.8px;color:#8d949d;letter-spacing:1.728px;">UTF-8</div>
<div class="t sb" style="left:2913.5px;top:1806.8px;color:#8d949d;letter-spacing:0.797px;">LF</div>
<div class="t sb" style="left:2991.5px;top:1806.8px;color:#8d949d;letter-spacing:1.062px;">Shell Script</div>
<div class="t sb" style="left:3203.0px;top:1806.8px;color:#8d949d;letter-spacing:0.531px;">Layout: U.S.</div>
</div></body></html>
